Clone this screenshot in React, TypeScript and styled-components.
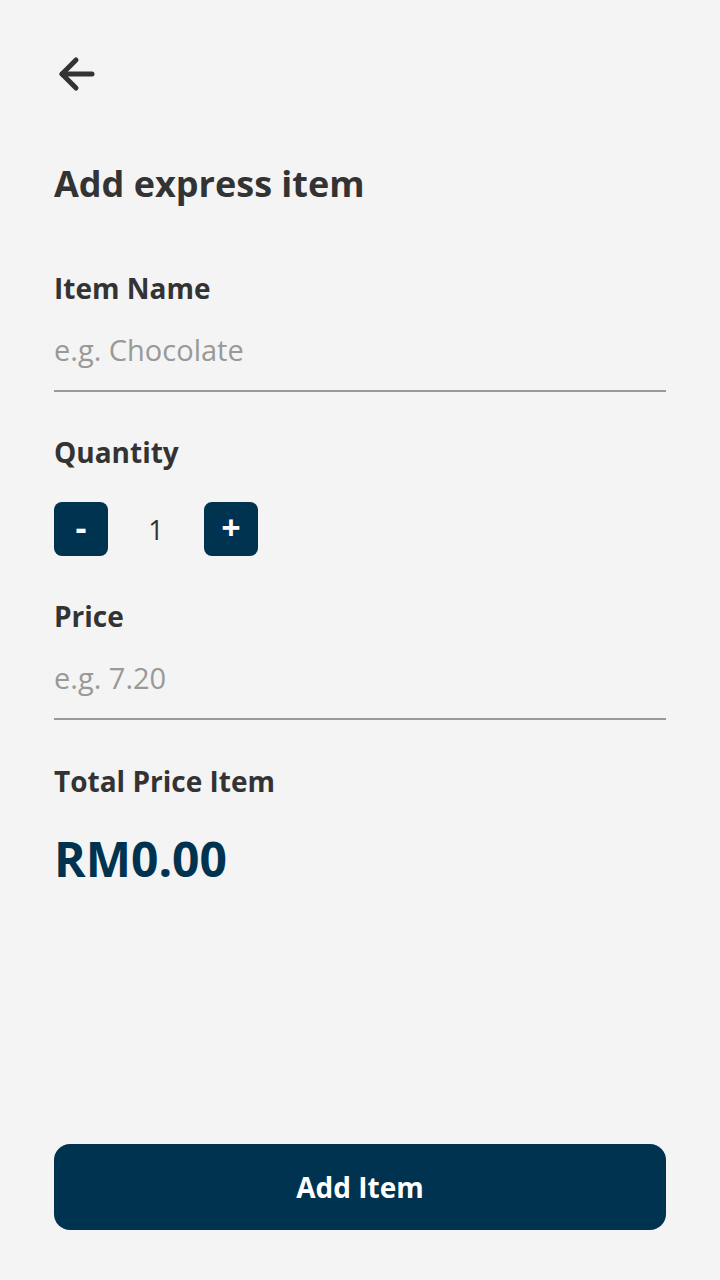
import React, { useState } from 'react';
import styled, { createGlobalStyle } from 'styled-components';

const GlobalStyle = createGlobalStyle`
  html, body {
    margin: 0;
    padding: 0;
    background: #f4f4f4;
  }
  * { box-sizing: border-box; }
`;

const Page = styled.div`
  width: 720px;
  height: 1280px;
  padding: 56px 54px 50px;
  display: flex;
  flex-direction: column;
  background: #f4f4f4;
  font-family: 'Open Sans', 'Noto Sans', sans-serif;
  color: #333333;
`;

const BackButton = styled.button`
  width: 40px;
  height: 36px;
  margin-left: 2px;
  padding: 0;
  border: none;
  background: none;
  display: flex;
  color: #333333;
`;

const Title = styled.h1`
  margin: 68px 0 0;
  font-size: 36px;
  font-weight: 700;
  line-height: 48px;
`;

const Field = styled.div<{ $top: number }>`
  margin-top: ${p => p.$top}px;
  display: flex;
  flex-direction: column;
`;

const Label = styled.label`
  font-size: 28px;
  font-weight: 700;
  line-height: 36px;
`;

const Input = styled.input`
  margin-top: 26px;
  width: 100%;
  border: none;
  border-bottom: 2px solid #999999;
  background: transparent;
  padding: 0 0 22px;
  font-family: inherit;
  font-size: 29px;
  line-height: 36px;
  color: #333333;
  outline: none;
  &::placeholder { color: #999999; }
`;

const Stepper = styled.div`
  margin-top: 32px;
  display: flex;
  align-items: center;
`;

const StepButton = styled.button`
  width: 54px;
  height: 54px;
  border: none;
  border-radius: 8px;
  background: #00334f;
  color: #ffffff;
  font-family: inherit;
  font-size: 34px;
  font-weight: 700;
  line-height: 1;
  display: flex;
  align-items: center;
  justify-content: center;
  padding: 0 0 4px;
`;

const Count = styled.span`
  width: 96px;
  text-align: center;
  font-size: 27px;
`;

const Total = styled.div`
  margin-top: 26px;
  font-size: 48px;
  font-weight: 700;
  line-height: 68px;
  color: #00334f;
`;

const SubmitButton = styled.button`
  margin-top: auto;
  width: 100%;
  height: 86px;
  border: none;
  border-radius: 16px;
  background: #00334f;
  color: #ffffff;
  font-family: inherit;
  font-size: 28px;
  font-weight: 700;
`;

export default function App() {
  const [qty, setQty] = useState(1);
  const [price, setPrice] = useState('');
  const total = (parseFloat(price) || 0) * qty;
  return (
    <Page>
      <GlobalStyle />
      <BackButton aria-label="Back">
        <svg width="40" height="36" viewBox="0 0 40 36" fill="none" stroke="currentColor" strokeWidth="5" strokeLinecap="round" strokeLinejoin="round">
          <path d="M36 18H6" />
          <path d="M20 4L6 18l14 14" />
        </svg>
      </BackButton>
      <Title>Add express item</Title>
      <Field $top={62}>
        <Label>Item Name</Label>
        <Input placeholder="e.g. Chocolate" />
      </Field>
      <Field $top={42}>
        <Label>Quantity</Label>
        <Stepper>
          <StepButton onClick={() => setQty(q => Math.max(1, q - 1))}>-</StepButton>
          <Count>{qty}</Count>
          <StepButton onClick={() => setQty(q => q + 1)}>+</StepButton>
        </Stepper>
      </Field>
      <Field $top={42}>
        <Label>Price</Label>
        <Input placeholder="e.g. 7.20" value={price} onChange={e => setPrice(e.target.value)} />
      </Field>
      <Field $top={43}>
        <Label>Total Price Item</Label>
        <Total>RM{total.toFixed(2)}</Total>
      </Field>
      <SubmitButton>Add Item</SubmitButton>
    </Page>
  );
}
